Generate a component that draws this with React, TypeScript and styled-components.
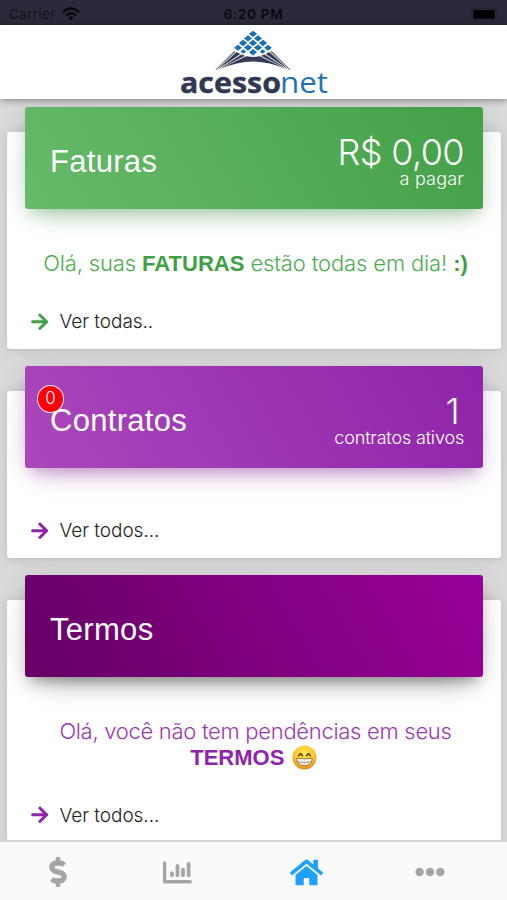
import React from "react";
import styled, { createGlobalStyle, css } from "styled-components";
import { FaArrowRight, FaDollarSign, FaEllipsisH, FaHome } from "react-icons/fa";

const GlobalStyle = createGlobalStyle`
  * { box-sizing: border-box; }
  body {
    margin: 0;
    background: #d8d8d8;
    font-family: "Liberation Sans", Arial, sans-serif;
  }
`;

const lightFace = css`
  font-family: Inter, "Liberation Sans", sans-serif;
  font-weight: 300;
`;

const Screen = styled.div`
  display: flex;
  flex-direction: column;
  width: 507px;
  height: 900px;
  overflow: hidden;
  background: #dadada;
`;

const StatusBar = styled.div`
  display: grid;
  grid-template-columns: 1fr auto 1fr;
  align-items: center;
  flex: 0 0 25px;
  padding: 3px 9px 0;
  background: #2a2a3a;
  color: #08080d;
  font: 500 13px/20px Inter, sans-serif;
`;

const Carrier = styled.div`
  display: flex;
  align-items: center;
  gap: 6px;
  font-weight: 400;
  font-size: 13.5px;
  letter-spacing: 0.35px;
  color: #12121a;
`;

const Clock = styled.div`
  font-weight: 600;
  font-size: 13.5px;
  letter-spacing: 0.7px;
`;

const BatterySlot = styled.div`
  display: flex;
  justify-content: flex-end;
  margin-right: -2px;
`;

const Header = styled.header`
  display: flex;
  justify-content: center;
  flex: 0 0 73.5px;
  background: #fff;
  box-shadow: 0 1px 7px rgba(0, 0, 0, 0.42);
  z-index: 1;
`;

const Content = styled.main`
  flex: 1;
  min-height: 0;
  overflow: hidden;
  padding: 33px 6px 0 7px;
`;

const Card = styled.section<{ $height: number }>`
  height: ${(p) => p.$height}px;
  margin-bottom: 41.5px;
  padding: 0 18px;
  display: flex;
  flex-direction: column;
  background: #fff;
  border-radius: 3px;
  box-shadow: 0 1px 14px rgba(0, 0, 0, 0.12), 0 1px 2px rgba(0, 0, 0, 0.06);
`;

const Banner = styled.div<{ $from: string; $to: string; $glow: string }>`
  display: flex;
  align-items: center;
  justify-content: space-between;
  flex: 0 0 102px;
  margin-top: -24.5px;
  padding: 0 19px 0 25px;
  color: #fff;
  border-radius: 3px;
  background: linear-gradient(60deg, ${(p) => p.$from}, ${(p) => p.$to});
  box-shadow: 0 16px 30px -14px ${(p) => p.$glow}, 0 4px 26px rgba(0, 0, 0, 0.12),
    0 9px 12px -6px ${(p) => p.$glow};
`;

const TitleWrap = styled.div`
  position: relative;
`;

const Title = styled.h2`
  margin: 7px 0 0;
  font-weight: 400;
  font-size: 31px;
  line-height: 36px;
  letter-spacing: 0.3px;
`;

const Badge = styled.span`
  position: absolute;
  left: -13px;
  top: -11px;
  width: 27px;
  height: 28px;
  border: 1.5px solid #ffe9f4;
  border-radius: 50%;
  background: #fb0006;
  text-align: center;
  font-size: 17px;
  line-height: 25px;
  ${lightFace}
`;

const Summary = styled.div`
  display: flex;
  flex-direction: column;
  align-items: flex-end;
  padding-top: 8px;
  ${lightFace}
`;

const Amount = styled.div<{ $inset?: number }>`
  margin-right: ${(p) => p.$inset ?? 0}px;
  font-size: 36px;
  line-height: 33px;
  letter-spacing: -0.6px;
`;

const Caption = styled.div<{ $spacing: number }>`
  font-size: 18px;
  line-height: 20px;
  letter-spacing: ${(p) => p.$spacing}px;
`;

const Message = styled.p<{ $color: string; $strong: string; $spacing: number }>`
  margin: 42px 0 0;
  padding-left: 3px;
  text-align: center;
  white-space: nowrap;
  color: ${(p) => p.$color};
  font-size: 22px;
  line-height: 25.5px;
  letter-spacing: ${(p) => p.$spacing}px;
  ${lightFace}
  strong {
    font-family: "Liberation Sans", sans-serif;
    font-weight: 700;
    letter-spacing: 0;
    color: ${(p) => p.$strong};
  }
  svg {
    margin: 0 4px 0 1.5px;
    vertical-align: -5px;
  }
`;

const More = styled.div<{ $color: string }>`
  display: flex;
  align-items: center;
  gap: 10px;
  margin-top: auto;
  padding: 0 0 15px 5px;
  font-size: 19px;
  line-height: 25px;
  letter-spacing: -0.05px;
  color: #222;
  ${lightFace}
  svg {
    color: ${(p) => p.$color};
    font-size: 19.5px;
  }
`;

const TabBar = styled.nav`
  display: grid;
  grid-template-columns: 115px 124px 134px 114px;
  flex: 0 0 60.5px;
  border-top: 2px solid #d5d5d5;
  background: #fafafa;
`;

const Tab = styled.div<{ $active?: boolean; $size: number }>`
  display: flex;
  align-items: center;
  justify-content: center;
  padding-top: 3px;
  color: ${(p) => (p.$active ? "#1fa2ff" : "#a5a5a5")};
  font-size: ${(p) => p.$size}px;
`;

const Wifi = () => (
  <svg width="18" height="14" viewBox="0 0 18 14" fill="none" stroke="#08080d" strokeWidth="2.4">
    <path d="M1 5.2Q9 -2 17 5.2" />
    <path d="M4 8.6Q9 4 14 8.6" />
    <path d="M6.2 10.6Q9 8.2 11.8 10.6L9 13.4Z" fill="#08080d" stroke="none" />
  </svg>
);

const Battery = () => (
  <svg width="29" height="12" viewBox="0 0 29 12">
    <rect x="0.5" y="0.5" width="25" height="11" rx="3" fill="none" stroke="#20202c" />
    <rect x="2" y="2" width="22" height="8.5" rx="2" fill="#000" />
    <path d="M27 4.2Q28.6 6 27 7.8Z" fill="#20202c" />
  </svg>
);

const BarsIcon = () => (
  <svg width="30" height="23" viewBox="0 0 30 23" fill="none" stroke="currentColor" strokeLinecap="round" strokeLinejoin="round">
    <path d="M2.6 2V20.8H28.2" strokeWidth="3.4" />
    <path d="M10 12.2V14.2M15.5 5V14.2M21 8.6V14.2M26.6 3V14.2" strokeWidth="3.8" />
  </svg>
);

const tiles: [number, number, number][] = [
  [84, 8.9, 1],
  [79, 13.4, 1], [89, 13.4, 1],
  [74, 18, 1], [84, 18, 1], [94, 18, 1],
  [69, 22.8, 0.95], [79, 22.6, 1], [89, 22.6, 1], [99, 22.8, 0.95],
  [74.4, 26.6, 0.7], [84, 27.2, 1], [93.6, 26.6, 0.7],
];

const LogoSvg = styled.svg`
  overflow: visible;
`;

const Logo = () => (
  <LogoSvg width="170" height="73" viewBox="0 0 170 73">
    <g fill="#1670b5">
      {tiles.map(([x, y, s]) => (
        <path key={`${x}-${y}`} d={`M${x} ${y - 3.2 * s}L${x + 4.1 * s} ${y}L${x} ${y + 3.2 * s}L${x - 4.1 * s} ${y}Z`} />
      ))}
    </g>
    <g fill="#343c58">
      <path d="M65.2 26L66.8 26.8L47.4 45L46.4 44.8Z" fill="#6b7183" />
      <path d="M67.6 27L71.4 29L48.6 44.4Z" />
      <path d="M72.4 29.4L76 30.8L50 44.2Z" />
      <path d="M77 31.2L84 32V36.4Q68 36.6 51 44Z" />
      <path d="M102.8 26L101.2 26.8L120.6 45L121.6 44.8Z" fill="#6b7183" />
      <path d="M100.4 27L96.6 29L119.4 44.4Z" />
      <path d="M95.6 29.4L92 30.8L118 44.2Z" />
      <path d="M91 31.2L84 32V36.4Q100 36.6 117 44Z" />
    </g>
    <text x="11" y="67.5" fontFamily="Open Sans" fontWeight="700" fontSize="29" fill="#303852" stroke="#303852" strokeWidth="0.4" textLength="101" lengthAdjust="spacingAndGlyphs">acesso</text>
    <text x="111" y="67.5" fontFamily="Open Sans" fontWeight="400" fontSize="29" fill="#1e73b7" textLength="48" lengthAdjust="spacingAndGlyphs">net</text>
  </LogoSvg>
);

const GrinEmoji = () => (
  <svg width="25" height="25" viewBox="0 0 25 25">
    <defs>
      <radialGradient id="grin" cx="0.5" cy="0.35" r="0.65">
        <stop offset="0" stopColor="#ffe94f" />
        <stop offset="0.65" stopColor="#fbc42e" />
        <stop offset="1" stopColor="#e0851a" />
      </radialGradient>
    </defs>
    <circle cx="12.5" cy="12.5" r="12" fill="url(#grin)" />
    <path d="M6.6 10.8L8.6 8.6L10.6 10.8M14.4 10.8L16.4 8.6L18.4 10.8" fill="none" stroke="#60401a" strokeWidth="1.5" strokeLinecap="round" strokeLinejoin="round" />
    <path d="M4.8 13.2Q12.5 14.6 20.2 13.2Q20 20.6 12.5 20.6Q5 20.6 4.8 13.2Z" fill="#fff" stroke="#8d6730" strokeWidth="0.9" />
    <path d="M5.4 16.8Q12.5 18.2 19.6 16.8" stroke="#857a68" strokeWidth="0.9" fill="none" />
    <path d="M9 14V20M12.5 14.4V20.6M16 14V20" stroke="#b9af9f" strokeWidth="0.5" fill="none" />
  </svg>
);

export default function App() {
  return (
    <>
      <GlobalStyle />
      <Screen>
        <StatusBar>
          <Carrier>Carrier <Wifi /></Carrier>
          <Clock>6:20 PM</Clock>
          <BatterySlot><Battery /></BatterySlot>
        </StatusBar>
        <Header><Logo /></Header>
        <Content>
          <Card $height={217.5}>
            <Banner $from="#66bb6a" $to="#43a047" $glow="rgba(76, 175, 80, 0.3)">
              <Title>Faturas</Title>
              <Summary>
                <Amount>R$ 0,00</Amount>
                <Caption $spacing={0.2}>a pagar</Caption>
              </Summary>
            </Banner>
            <Message $color="#4cab50" $strong="#3f9f45" $spacing={-0.13}>
              Olá, suas <strong>FATURAS</strong> estão todas em dia! <strong>:)</strong>
            </Message>
            <More $color="#43a047"><FaArrowRight />Ver todas..</More>
          </Card>
          <Card $height={167.5}>
            <Banner $from="#ab47bc" $to="#8e24aa" $glow="rgba(156, 39, 176, 0.3)">
              <TitleWrap>
                <Title>Contratos</Title>
                <Badge>0</Badge>
              </TitleWrap>
              <Summary>
                <Amount $inset={5}>1</Amount>
                <Caption $spacing={-0.17}>contratos ativos</Caption>
              </Summary>
            </Banner>
            <More $color="#8e24aa"><FaArrowRight />Ver todos...</More>
          </Card>
          <Card $height={243}>
            <Banner $from="#660066" $to="#990099" $glow="rgba(0, 0, 0, 0.3)">
              <Title>Termos</Title>
            </Banner>
            <Message $color="#9a38b3" $strong="#8e24aa" $spacing={-0.29}>
              Olá, você não tem pendências em seus<br />
              <strong>TERMOS</strong> <GrinEmoji />
            </Message>
            <More $color="#8e24aa"><FaArrowRight />Ver todos...</More>
          </Card>
        </Content>
        <TabBar>
          <Tab $size={30}><FaDollarSign stroke="currentColor" strokeWidth={12} /></Tab>
          <Tab $size={30}><BarsIcon /></Tab>
          <Tab $size={33} $active><FaHome /></Tab>
          <Tab $size={30}><FaEllipsisH /></Tab>
        </TabBar>
      </Screen>
    </>
  );
}
